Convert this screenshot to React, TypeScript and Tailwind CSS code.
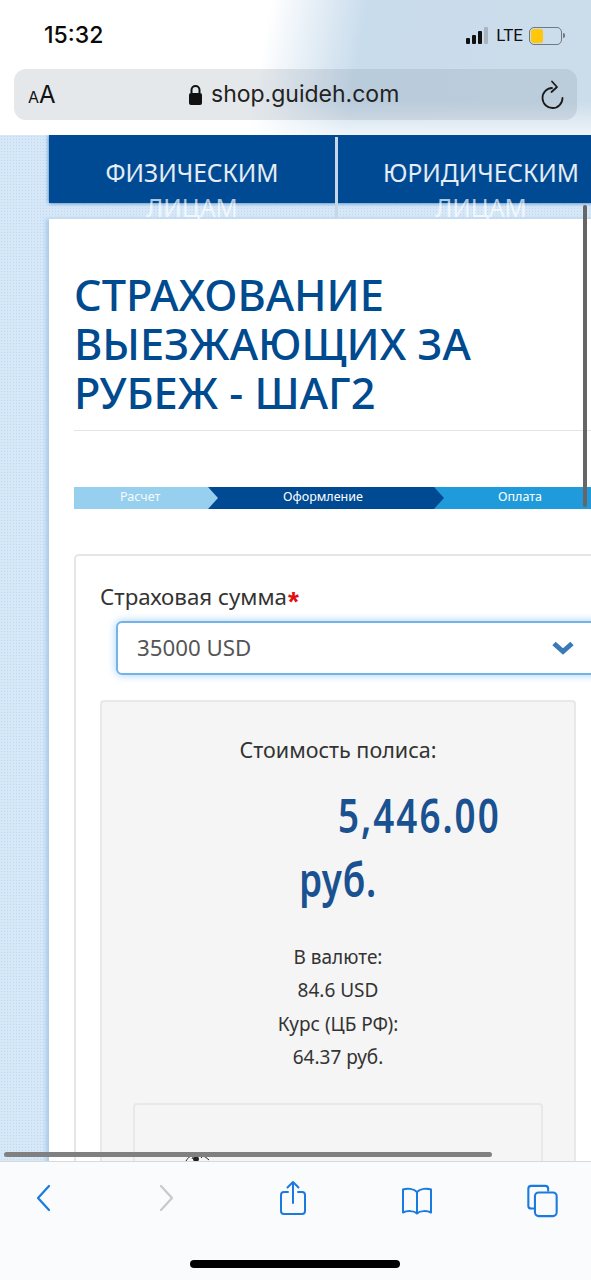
import React from 'react';

const sans = { fontFamily: '"Noto Sans", "Open Sans", sans-serif' };

const StatusBar = () => (
  <div className="flex h-[69px] items-center justify-between pl-[44px] pr-[26px] pt-[2px]">
    <span className="font-['Inter',sans-serif] text-[23px] font-medium leading-none text-[#0a0a0a]">15:32</span>
    <div className="flex items-center gap-[4px]">
      {/* signal */}
      <div className="mr-[4px] flex items-end gap-[2px]">
        <div className="h-[6px] w-[4px] rounded-[1px] bg-[#111]"></div>
        <div className="h-[9px] w-[4px] rounded-[1px] bg-[#111]"></div>
        <div className="h-[13px] w-[4px] rounded-[1px] bg-[#111]"></div>
        <div className="h-[17px] w-[4px] rounded-[1px] bg-[#a9b4bf]"></div>
      </div>
      <span className="font-['Roboto',sans-serif] text-[17px] leading-none text-[#111]">LTE</span>
      {/* battery */}
      <div className="ml-[2px] flex items-center">
        <div className="h-[18px] w-[33px] rounded-[5px] border border-[#6f7780] p-[1px]">
          <div className="h-full w-[12px] rounded-[3px] bg-[#ffc60a]"></div>
        </div>
        <div className="ml-[1px] h-[5px] w-[2px] rounded-r-sm bg-[#6f7780]"></div>
      </div>
    </div>
  </div>
);

const AddressBar = () => (
  <div className="mx-[14px] flex h-[51px] items-center rounded-[12px] bg-[#7f8c99]/20 pl-[14px] pr-[12px]">
    <span className="w-[120px] font-['Inter',sans-serif] leading-none text-[#111]">
      <span className="text-[16px]">A</span>
      <span className="text-[24px]">A</span>
    </span>
    <div className="ml-[40px] flex items-center gap-[8px]">
      <svg width="15" height="22" viewBox="0 0 15 22">
        <path d="M3.5 9V6a4 4 0 0 1 8 0v3" fill="none" stroke="#111" strokeWidth="2" />
        <rect x="1" y="9" width="13" height="12" rx="2" fill="#111" />
      </svg>
      <span className="font-['Inter',sans-serif] text-[23px] leading-none text-[#222]">shop.guideh.com</span>
    </div>
    <svg className="ml-auto" width="26" height="30" viewBox="0 0 26 30" fill="none" stroke="#1a1a1a" strokeWidth="1.8" strokeLinecap="round" strokeLinejoin="round">
      <path d="M13 8A10 10 0 1 0 23.500 18" />
      <path d="M13 1.500L18 7l-5.500 5" />
    </svg>
  </div>
);

const Tabs = () => (
  <div className="relative ml-[49px] flex h-[68px] w-[600px] bg-[#004a94] pt-[20px] shadow-[0_0_4px_#2b6cb0]">
    <div className="h-[90px] w-[286px] text-center text-[24.5px] leading-[35px] text-white/90 font-['Noto_Sans',sans-serif]">
      ФИЗИЧЕСКИМ<br /><span className="text-white/70">ЛИЦАМ</span>
    </div>
    <div className="-mt-[18px] h-[81px] w-[3px] bg-[#c9d6e6]"></div>
    <div className="h-[90px] w-[286px] text-center text-[24.5px] leading-[35px] text-white/90 font-['Noto_Sans',sans-serif]">
      ЮРИДИЧЕСКИМ<br /><span className="text-white/70">ЛИЦАМ</span>
    </div>
  </div>
);

const Steps = () => (
  <div className="flex h-[22px] w-[530px] text-[12.5px] leading-[20px] text-white" style={sans}>
    <div className="relative w-[134px] bg-[#97cfee] pl-[46px] text-white/90">
      Расчет
      <div className="absolute -right-[10px] top-0 z-10 h-0 w-0 border-y-[11px] border-l-[10px] border-y-transparent border-l-[#97cfee]"></div>
    </div>
    <div className="relative w-[226px] bg-[#004a94] pl-[75px]">
      Оформление
      <div className="absolute -right-[10px] top-0 z-10 h-0 w-0 border-y-[11px] border-l-[10px] border-y-transparent border-l-[#004a94]"></div>
    </div>
    <div className="flex-1 bg-[#1f9bdc] pl-[64px]">Оплата</div>
  </div>
);

const PriceBox = () => (
  <div className="mt-[25px] w-[476px] rounded-[4px] border-2 border-[#e8e8e8] bg-[#f5f5f5] pt-[34px] text-center text-[#333]" style={sans}>
    <div className="text-[21.5px] leading-[28px]">Стоимость полиса:</div>
    <div className="mt-[17px] text-left text-[46px] font-semibold leading-[68px] text-[#1a5190]">
      <div className="pl-[236px]"><span className="inline-block origin-left scale-x-[0.8] tracking-[2.5px]">5,446.00</span></div>
      <div className="-mt-[4px] pl-[197px]"><span className="inline-block origin-left scale-x-[0.8] tracking-[1px]">руб.</span></div>
    </div>
    <div className="mt-[28px] text-[19px] leading-[33.3px] text-[#333]">
      <div>В валюте:</div>
      <div>84.6 USD</div>
      <div>Курс (ЦБ РФ):</div>
      <div>64.37 руб.</div>
    </div>
    <div className="mx-[31px] mt-[29px] h-[120px] rounded-[4px] border-2 border-[#e8e8e8] bg-[#f5f5f5] pl-[50px] pt-[46px]">
      <svg width="26" height="14" viewBox="0 0 26 14" fill="none" stroke="#222" strokeWidth="1">
        <path d="M1 10 C6 2 14 0 24 9" />
        <path d="M7 8 C9 3 14 3 17 7" />
        <circle cx="11" cy="8" r="2.5" fill="#222" />
      </svg>
    </div>
  </div>
);

const Content = () => (
  <div className="ml-[49px] mt-[16px] w-[600px] bg-white pl-[25px] shadow-[-3px_0_4px_#a9c9ea]">
    <h1 className="pt-[51px] text-[43.3px] font-medium leading-[49px] text-[#004a8f]" style={sans}>
      СТРАХОВАНИЕ<br />ВЫЕЗЖАЮЩИХ ЗА<br />РУБЕЖ - ШАГ2
    </h1>
    <div className="mt-[13px] h-px bg-[#e5e5e5]"></div>
    <div className="mt-[56px]">
      <Steps />
    </div>
    <div className="mt-[45px] h-[700px] rounded-[5px] border-2 border-[#e6e6e6] pl-[24px] pt-[26px]">
      <div className="flex h-[30px] text-[22.3px] leading-[30px] text-[#333]" style={sans}>
        Страховая сумма
        <span className="ml-[1px] h-[30px] font-['Liberation_Sans',sans-serif] text-[28px] font-bold leading-[40px] text-[#e01010]">*</span>
      </div>
      <div className="ml-[16px] mt-[9px] flex h-[54px] w-[500px] items-center rounded-[6px] border-2 border-[#74b2ea] bg-white pl-[19px] shadow-[0_0_8px_rgba(102,175,233,0.6)]">
        <span className="w-[414px] text-[22.3px] text-[#555]" style={sans}>35000 USD</span>
        <svg width="24" height="16" viewBox="0 0 24 16">
          <path d="M3 3.500l9 8 9-8" fill="none" stroke="#3a7ab8" strokeWidth="5" />
        </svg>
      </div>
      <PriceBox />
    </div>
  </div>
);

const Toolbar = () => (
  <div className="flex h-[119px] items-start border-t border-[#d9d9d9] bg-[#fafbfc] pt-[22px]">
    <svg className="ml-[35px]" width="16" height="28" viewBox="0 0 16 28" fill="none" stroke="#1a7ae0" strokeWidth="2.2" strokeLinecap="round" strokeLinejoin="round">
      <path d="M14 2L3 14l11 12" />
    </svg>
    <svg className="ml-[108px]" width="16" height="28" viewBox="0 0 16 28" fill="none" stroke="#c9c9c9" strokeWidth="2.2" strokeLinecap="round" strokeLinejoin="round">
      <path d="M2 2l11 12L2 26" />
    </svg>
    <svg className="-mt-[4px] ml-[105px]" width="26" height="36" viewBox="0 0 26 36" fill="none" stroke="#1a7ae0" strokeWidth="2" strokeLinecap="round" strokeLinejoin="round">
      <path d="M8 12H4a3 3 0 0 0-3 3v16a3 3 0 0 0 3 3h18a3 3 0 0 0 3-3V15a3 3 0 0 0-3-3h-4" />
      <path d="M13 23V2M7.500 7.500L13 2l5.500 5.500" />
    </svg>
    <svg className="ml-[95px] mt-[3px]" width="32" height="28" viewBox="0 0 32 28" fill="none" stroke="#1a7ae0" strokeWidth="2" strokeLinecap="round" strokeLinejoin="round">
      <path d="M16 5C13 1.500 6 1 2 2.500v23c4-2 11-2 14 1 3-3 10-3 14-1v-23C26 1 19 1.500 16 5zM16 5v21" />
    </svg>
    <svg className="ml-[93px]" width="33" height="34" viewBox="0 0 34 36" fill="none" stroke="#1a7ae0" strokeWidth="2.2" strokeLinejoin="round">
      <path d="M8 26H5a3 3 0 0 1-3-3V5a3 3 0 0 1 3-3h15a3 3 0 0 1 3 3v3" />
      <rect x="9" y="9" width="23" height="25" rx="4" />
    </svg>
  </div>
);

export default function App() {
  return (
    <div className="relative flex h-[1280px] w-[591px] flex-col overflow-hidden bg-white">
      <div className="h-[135px] shrink-0 bg-[linear-gradient(to_bottom,transparent_75%,rgba(255,255,255,0.7)),linear-gradient(100deg,#ffffff_44%,#c9dcec_60%,#cbdceb_85%)]">
        <StatusBar />
        <AddressBar />
      </div>
      <div className="min-h-0 flex-1 overflow-hidden bg-[#d6e8f8] bg-[radial-gradient(#bfd9f2_1px,transparent_1px)] bg-[length:3px_3px]">
        <Tabs />
        <Content />
      </div>
      <Toolbar />
      {/* scroll indicators */}
      <div className="absolute left-[583px] top-[205px] h-[302px] w-[4px] rounded-full bg-[#666]"></div>
      <div className="absolute left-[4px] top-[1152px] h-[5px] w-[488px] rounded-full bg-[#808080]"></div>
      <div className="absolute bottom-[12px] left-[190px] h-[8px] w-[210px] rounded-full bg-black"></div>
    </div>
  );
}
